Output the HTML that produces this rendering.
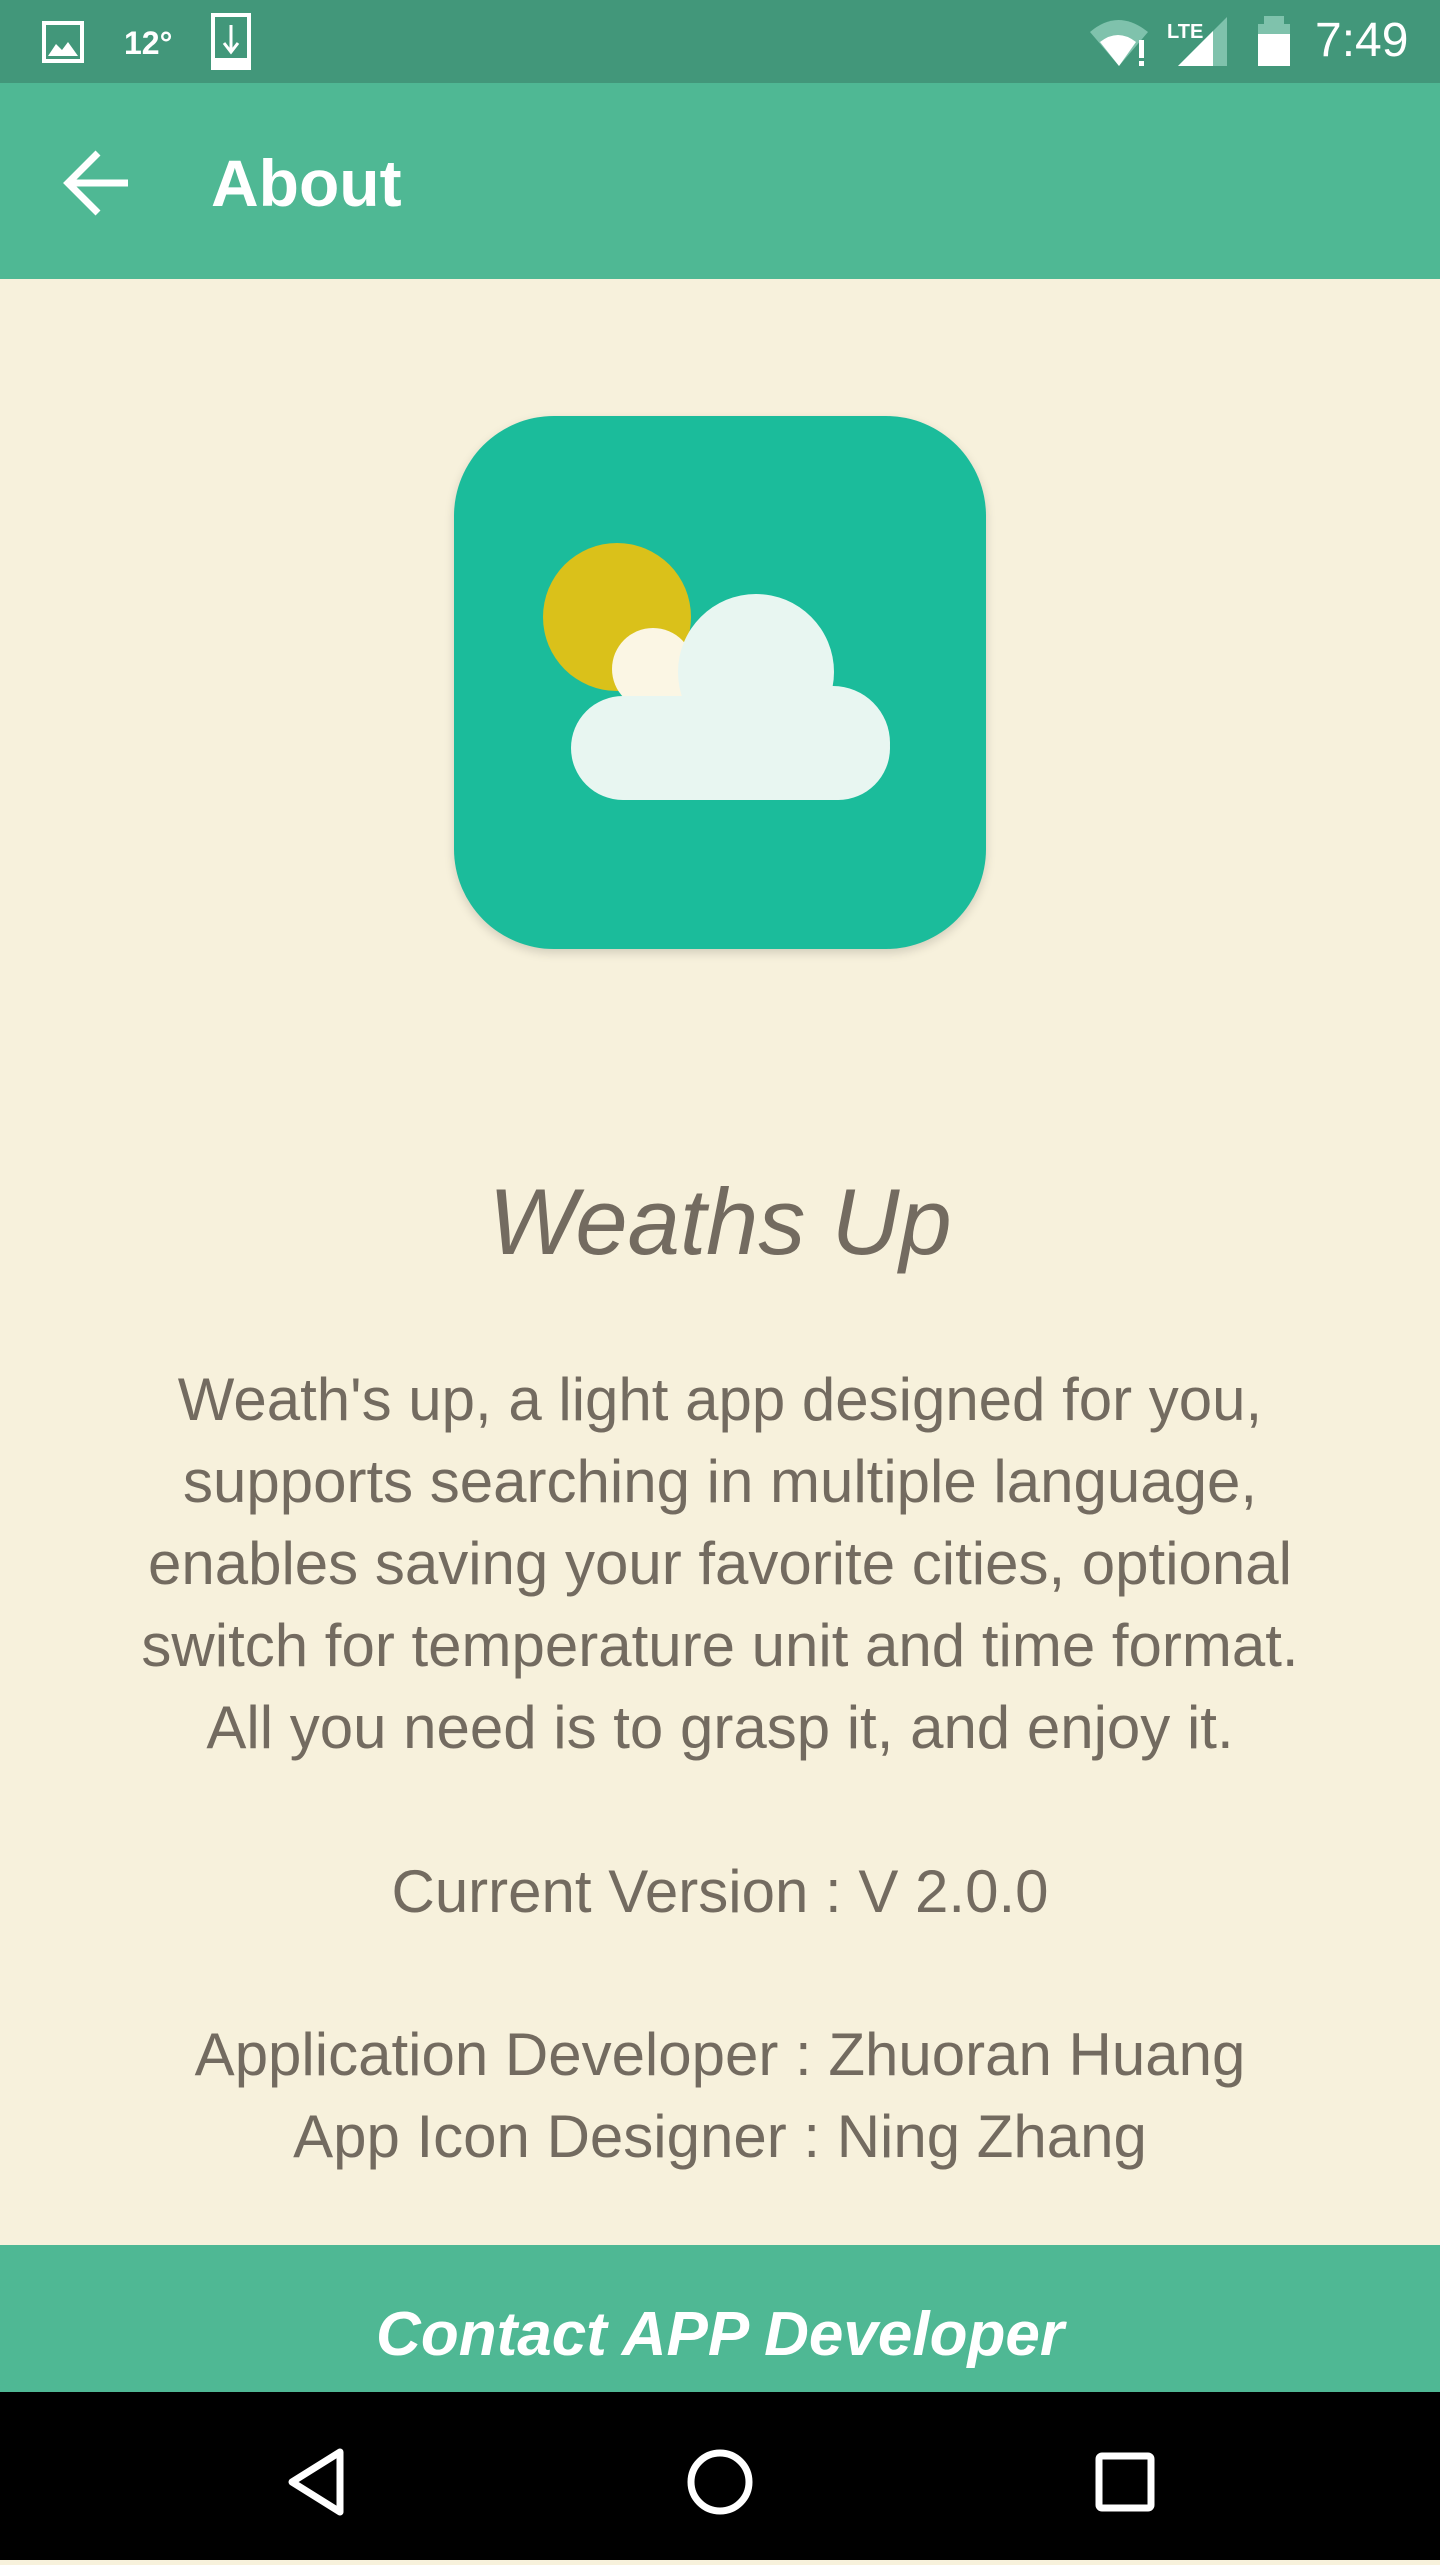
<!DOCTYPE html>
<html><head><meta charset="utf-8"><style>
*{margin:0;padding:0;box-sizing:border-box}
body{width:1440px;height:2560px;background:#f7f1dc;font-family:"Liberation Sans",sans-serif;position:relative;overflow:hidden}
.sb{position:absolute;top:0;left:0;width:1440px;height:83px;background:#42977a}
.ab{position:absolute;top:83px;left:0;width:1440px;height:196px;background:#4fb894}
.ab .t{position:absolute;left:211px;top:67px;font-size:66px;color:#fff;font-weight:bold;line-height:1}
.icon{position:absolute;left:454px;top:416px;width:532px;height:533px;border-radius:100px;background:#1bbc9b;box-shadow:0 4px 10px rgba(0,0,0,.15)}
.title{position:absolute;top:1166px;left:0;width:1440px;text-align:center;font-style:italic;font-size:94px;color:#736b60;line-height:1.2}
.txt{position:absolute;left:0;width:1440px;text-align:center;font-size:60px;color:#736b60;line-height:82px}
.btn{position:absolute;top:2245px;left:0;width:1440px;height:147px;background:#4fb894;color:#fff;font-weight:bold;font-style:italic;font-size:62px;text-align:center;line-height:110px;padding-top:35px}
.nav{position:absolute;top:2392px;left:0;width:1440px;height:168px;background:#000}
</style></head><body>
<div class="sb">
<svg width="1440" height="83" style="position:absolute;left:0;top:0">
<rect x="44" y="23" width="38" height="38" fill="none" stroke="#fff" stroke-width="4"/>
<path d="M48 56 L56 44 L62 50 L68 42 L78 56 Z" fill="#fff"/>
<text x="124" y="54" font-family="Liberation Sans" font-weight="bold" font-size="32" fill="#fff">12°</text>
<rect x="213" y="15" width="36" height="53" fill="none" stroke="#fff" stroke-width="4"/>
<rect x="213" y="58" width="36" height="10" fill="#fff"/>
<path d="M231 25 V50 M224 43 L231 52 L238 43" stroke="#fff" stroke-width="3" fill="none"/>
<path d="M1090 32 Q1118 8 1148 32 L1119 66 Z" fill="#7fc2ac"/>
<path d="M1100 42 Q1118 28 1136 42 L1119 66 Z" fill="#fff"/>
<rect x="1139" y="40" width="5" height="18" fill="#fff"/><rect x="1139" y="61" width="5" height="5" fill="#fff"/>
<text x="1167" y="38" font-family="Liberation Sans" font-weight="bold" font-size="20" fill="#fff">LTE</text>
<path d="M1178 66 L1227 17 L1227 66 Z" fill="#7fc2ac"/><path d="M1178 66 L1213 31 L1213 66 Z" fill="#fff"/>
<rect x="1258" y="24" width="32" height="42" fill="#fff"/><rect x="1264" y="16" width="20" height="10" fill="#7fc2ac"/><rect x="1258" y="24" width="32" height="10" fill="#7fc2ac"/>
<text x="1315" y="56" font-family="Liberation Sans" font-size="48" fill="#fff">7:49</text>
</svg></div>
<div class="ab">
<svg width="140" height="196" style="position:absolute;left:0;top:0">
<path d="M68 100 H128 M98 70 L68 100 L98 130" stroke="#fff" stroke-width="7" fill="none"/>
</svg>
<div class="t">About</div></div>
<div class="icon">
<svg width="532" height="533">
<circle cx="163" cy="201" r="74" fill="#dac11a"/>
<circle cx="199" cy="253" r="41" fill="#fbf6e4"/>
<g fill="#e8f6f1">
<circle cx="302" cy="256" r="78"/>
<circle cx="379" cy="327" r="57"/>
<rect x="117" y="280" width="319" height="104" rx="52"/>
</g>
</svg></div>
<div class="title">Weaths Up</div>
<div class="txt" style="top:1359px">Weath's up, a light app designed for you,<br>supports searching in multiple language,<br>enables saving your favorite cities, optional<br>switch for temperature unit and time format.<br>All you need is to grasp it, and enjoy it.</div>
<div class="txt" style="top:1851px">Current Version : V 2.0.0</div>
<div class="txt" style="top:2014px">Application Developer : Zhuoran Huang<br>App Icon Designer : Ning Zhang</div>
<div class="btn">Contact APP Developer</div>
<div class="nav"><svg width="1440" height="168">
<path d="M340 60 L292 90 L340 120 Z" fill="none" stroke="#fff" stroke-width="7" stroke-linejoin="round"/>
<circle cx="720" cy="90" r="29" fill="none" stroke="#fff" stroke-width="7"/>
<rect x="1099" y="64" width="52" height="52" rx="3" fill="none" stroke="#fff" stroke-width="7"/>
</svg></div>
</body></html>
